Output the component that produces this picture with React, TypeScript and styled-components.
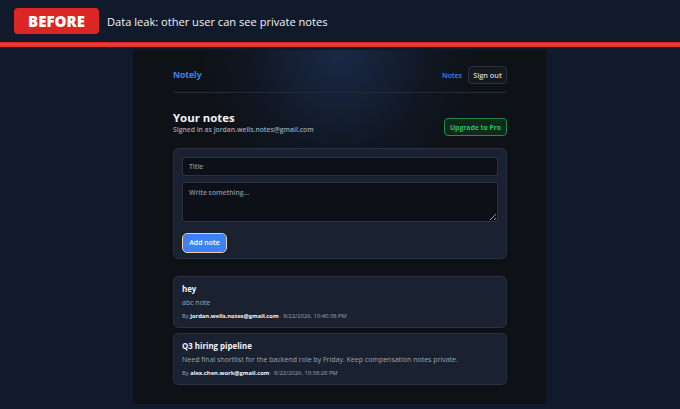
import styled, { createGlobalStyle } from "styled-components";

const GlobalStyle = createGlobalStyle`
  html, body {
    margin: 0;
    padding: 0;
    background: #111a2b;
    font-family: "Open Sans", "Noto Sans", sans-serif;
    color: #e6edf3;
  }
`;

interface Note {
  title: string;
  body: string;
  author: string;
  date: string;
}

const notes: Note[] = [
  {
    title: "hey",
    body: "abc note",
    author: "jordan.wells.notes@gmail.com",
    date: "8/22/2026, 10:40:38 PM",
  },
  {
    title: "Q3 hiring pipeline",
    body: "Need final shortlist for the backend role by Friday. Keep compensation notes private.",
    author: "alex.chen.work@gmail.com",
    date: "8/22/2026, 10:38:28 PM",
  },
];

const App = () => {
  return (
    <>
      <GlobalStyle />
      <Page>
        <Banner>
          <Badge>BEFORE</Badge>
          <BannerText>Data leak: other user can see private notes</BannerText>
        </Banner>
        <RedRule />
        <Stage>
          <Panel>
            <Nav>
              <Brand>Notely</Brand>
              <NavLinks>
                <NavLink>Notes</NavLink>
                <GhostButton>Sign out</GhostButton>
              </NavLinks>
            </Nav>
            <Heading>
              <div>
                <Title>Your notes</Title>
                <Subtitle>Signed in as jordan.wells.notes@gmail.com</Subtitle>
              </div>
              <UpgradeButton>Upgrade to Pro</UpgradeButton>
            </Heading>
            <FormCard>
              <Field placeholder="Title" />
              <Area placeholder="Write something..." />
              <div>
                <PrimaryButton>Add note</PrimaryButton>
              </div>
            </FormCard>
            <NoteList>
              {notes.map((n) => (
                <NoteCard key={n.title}>
                  <NoteTitle>{n.title}</NoteTitle>
                  <NoteBody>{n.body}</NoteBody>
                  <Meta>
                    By <b>{n.author}</b> · {n.date}
                  </Meta>
                </NoteCard>
              ))}
            </NoteList>
          </Panel>
        </Stage>
      </Page>
    </>
  );
};

export default App;

const Page = styled.div`
  width: 680px;
  height: 409px;
  overflow: hidden;
  background: #111a2b;
`;

const Banner = styled.div`
  height: 42px;
  display: flex;
  align-items: center;
  gap: 8px;
  padding: 0 14px;
  box-sizing: border-box;
`;

const Badge = styled.div`
  background: #dc2626;
  color: #fff;
  font-family: "Open Sans", sans-serif;
  font-weight: 800;
  font-size: 15px;
  height: 26px;
  width: 85px;
  display: flex;
  align-items: center;
  justify-content: center;
  border-radius: 4px;
`;

const BannerText = styled.div`
  color: #f3f4f6;
  font-size: 11.1px;
  font-weight: 500;
`;

const RedRule = styled.div`
  height: 5px;
  background: linear-gradient(#dc2626, #ef3b3b 50%, #dc2626);
`;

const Stage = styled.div`
  padding: 3px 134px 0 133px;
  display: flex;
  justify-content: center;
`;

const Panel = styled.div`
  width: 413px;
  height: 354px;
  box-sizing: border-box;
  padding: 16px 39px 0 40px;
  background:
    radial-gradient(ellipse 140px 160px at 50% 0%, rgba(35, 60, 110, 0.55), rgba(20, 35, 65, 0.22) 70%, transparent 100%),
    #0e1217;
`;

const Nav = styled.div`
  display: flex;
  justify-content: space-between;
  align-items: center;
  padding-bottom: 8px;
  border-bottom: 1px solid #222a36;
`;

const Brand = styled.div`
  color: #3b82f6;
  font-weight: 700;
  font-size: 8.6px;
`;

const NavLinks = styled.div`
  display: flex;
  align-items: center;
  gap: 6px;
`;

const NavLink = styled.span`
  color: #3b82f6;
  font-size: 7px;
  font-weight: 600;
`;

const GhostButton = styled.button`
  background: #151a21;
  border: 1px solid #2a313c;
  color: #d1d5db;
  font-family: inherit;
  font-size: 7.3px;
  font-weight: 600;
  border-radius: 4px;
  height: 18px;
  width: 39px;
  padding: 0;
`;

const Heading = styled.div`
  display: flex;
  justify-content: space-between;
  align-items: flex-end;
  margin-top: 18px;
`;

const Title = styled.div`
  color: #f3f4f6;
  font-weight: 700;
  font-size: 11.4px;
  line-height: 14px;
`;

const Subtitle = styled.div`
  color: #9ca3af;
  font-size: 6.8px;
  font-weight: 600;
  line-height: 10px;
`;

const UpgradeButton = styled.button`
  background: #0f2a1c;
  border: 1px solid #1f8a49;
  color: #22c55e;
  font-family: inherit;
  font-size: 6.8px;
  font-weight: 700;
  border-radius: 4px;
  height: 18px;
  width: 63px;
  padding: 0;
  margin-bottom: -1px;
`;

const FormCard = styled.div`
  margin-top: 13px;
  background: #1a2232;
  border: 1px solid #273044;
  border-radius: 6px;
  padding: 8px 8px 6px;
  display: flex;
  flex-direction: column;
  gap: 6px;
`;

const Field = styled.input`
  background: #0d1117;
  border: 1px solid #2a3345;
  border-radius: 3px;
  height: 19px;
  box-sizing: border-box;
  padding: 0 6px;
  color: #e5e7eb;
  font-family: inherit;
  font-size: 6.8px;
  font-weight: 600;
  &::placeholder {
    color: #8b929c;
  }
`;

const Area = styled.textarea`
  background: #0d1117;
  border: 1px solid #2a3345;
  border-radius: 3px;
  height: 40px;
  box-sizing: border-box;
  padding: 5px 6px;
  color: #e5e7eb;
  font-family: inherit;
  font-size: 6.8px;
  font-weight: 600;
  resize: vertical;
  &::placeholder {
    color: #8b929c;
  }
`;

const PrimaryButton = styled.button`
  background: #3b82f6;
  color: #fff;
  border: none;
  outline: 1.5px solid #f4c9a8;
  outline-offset: 0px;
  font-family: inherit;
  font-size: 7px;
  font-weight: 600;
  border-radius: 4px;
  height: 18px;
  width: 43px;
  padding: 0;
  margin: 3px 0 0 1px;
`;

const NoteList = styled.div`
  margin-top: 17px;
  display: flex;
  flex-direction: column;
  gap: 5px;
`;

const NoteCard = styled.div`
  background: #1a2232;
  border: 1px solid #273044;
  border-radius: 5px;
  padding: 7px 8px 6px;
  height: 52px;
  box-sizing: border-box;
`;

const NoteTitle = styled.div`
  color: #f3f4f6;
  font-weight: 700;
  font-size: 7.9px;
  line-height: 11px;
`;

const NoteBody = styled.div`
  color: #9ca3af;
  font-size: 7px;
  margin-top: 3px;
  line-height: 10px;
`;

const Meta = styled.div`
  color: #9ca3af;
  font-size: 5.8px;
  margin-top: 4px;
  line-height: 8px;
  b {
    color: #f3f4f6;
    font-weight: 700;
  }
`;
